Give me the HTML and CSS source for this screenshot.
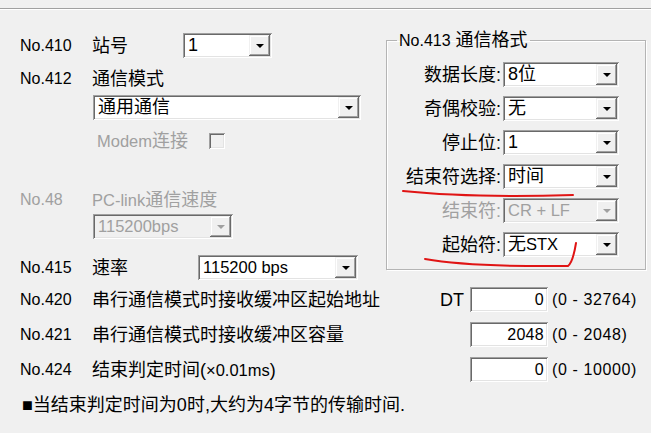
FILE: index.html
```html
<!DOCTYPE html>
<html lang="zh-CN">
<head>
  <meta charset="UTF-8"/>
  <title>通信设置</title>
  <link rel="stylesheet" href="styles.css"/>
</head>
<body>
  <div class="topline"></div>

  <div class="panel">
    <div class="upper">
      <!-- left column -->
      <div class="left">
        <div class="row r410">
          <span class="no num">No.410</span>
          <span class="name w91">站号</span>
          <div class="combo w89"><span class="val">1</span><span class="drop"><i></i></span></div>
        </div>

        <div class="row r412">
          <span class="no num">No.412</span>
          <span class="name">通信模式</span>
        </div>
        <div class="combo c412"><span class="val">通用通信</span><span class="drop"><i></i></span></div>

        <div class="row modem disabled">
          <span class="modem-label"><span class="lat">Modem</span>连接</span>
          <span class="check"></span>
        </div>

        <div class="row r48 disabled">
          <span class="no num">No.48</span>
          <span class="name"><span class="lat">PC-link</span>通信速度</span>
        </div>
        <div class="combo c48 off"><span class="val lat">115200bps</span><span class="drop"><i></i></span></div>

        <div class="row r415">
          <span class="no num">No.415</span>
          <span class="name w106">速率</span>
          <div class="combo w160"><span class="val lat">115200 bps</span><span class="drop"><i></i></span></div>
        </div>
      </div>

      <!-- No.413 group -->
      <fieldset class="group">
        <legend><span class="num">No.413</span> 通信格式</legend>
        <div class="group-rows">
          <div class="grow"><span class="glabel">数据长度:</span><div class="combo gcombo"><span class="val">8位</span><span class="drop"><i></i></span></div></div>
          <div class="grow"><span class="glabel">奇偶校验:</span><div class="combo gcombo"><span class="val">无</span><span class="drop"><i></i></span></div></div>
          <div class="grow"><span class="glabel">停止位:</span><div class="combo gcombo"><span class="val">1</span><span class="drop"><i></i></span></div></div>
          <div class="grow"><span class="glabel">结束符选择:</span><div class="combo gcombo"><span class="val">时间</span><span class="drop"><i></i></span></div></div>
          <div class="grow disabled"><span class="glabel">结束符:</span><div class="combo gcombo off"><span class="val lat">CR + LF</span><span class="drop"><i></i></span></div></div>
          <div class="grow"><span class="glabel">起始符:</span><div class="combo gcombo"><span class="val">无<span class="lat">STX</span></span><span class="drop"><i></i></span></div></div>
        </div>
      </fieldset>
    </div>

    <div class="lower">
      <div class="lrow">
        <span class="num">No.420</span>
        <span>串行通信模式时接收缓冲区起始地址</span>
        <span class="dt">DT</span>
        <span class="edit num">0</span>
        <span class="range num">(0 - 32764)</span>
      </div>
      <div class="lrow">
        <span class="num">No.421</span>
        <span>串行通信模式时接收缓冲区容量</span>
        <span class="dt"></span>
        <span class="edit num">2048</span>
        <span class="range num">(0 - 2048)</span>
      </div>
      <div class="lrow">
        <span class="num">No.424</span>
        <span>结束判定时间(<span class="lat">×0.01ms</span>)</span>
        <span class="dt"></span>
        <span class="edit num">0</span>
        <span class="range num">(0 - 10000)</span>
      </div>
    </div>

    <p class="note">■当结束判定时间为0时,大约为4字节的传输时间.</p>
  </div>

  <!-- hand-drawn red marks -->
  <svg class="marks" width="651" height="433" viewBox="0 0 651 433">
    <path d="M403 191 Q 470 198 573 195" fill="none" stroke="#e01414" stroke-width="2" stroke-linecap="round"/>
    <path d="M425 259 Q 470 267 568 266 Q 573 262 576 243" fill="none" stroke="#e01414" stroke-width="2" stroke-linecap="round"/>
  </svg>
</body>
</html>
```

FILE: styles.css
```css
* {
  box-sizing: border-box;
  margin: 0;
  padding: 0;
}

body {
  position: relative;
  width: 651px;
  height: 433px;
  overflow: hidden;
  background: #f0f0f0;
  color: #000;
  font-family: "Liberation Sans", "Noto Sans CJK SC", sans-serif;
  font-size: 18px;
  line-height: 22px;
}

/* narrow latin runs (numbers, item codes) */
.num { font-size: 16px; }
.lat { font-size: 16.5px; }

.disabled,
.off .val { color: #a0a0a0; }

/* top separator */
.topline {
  margin-top: 8px;
  border-top: 1px solid #a0a0a0;
  border-bottom: 1px solid #fff;
}

.panel { padding-left: 20px; }

.upper { display: flex; }

/* Left column */
.left { width: 366px; }

.row {
  display: flex;
  align-items: center;
  white-space: nowrap;
}
.no   { width: 72px; flex: none; }
.w91  { width: 91px; }
.w106 { width: 106px; }

.r410 { margin-top: 23px; height: 25px; }
.r412 { margin-top: 10px; height: 22px; }
.c412 { margin: 5px 0 0 73px; width: 268px; }
.modem { margin-top: 13px; height: 16px; padding-left: 77px; }
.modem-label { width: 112px; }
.r48  { margin-top: 40px; height: 22px; }
.c48  { margin: 3px 0 0 73px; width: 140px; }
.r415 { margin-top: 16px; height: 25px; }

/* Combo box */
.combo {
  display: flex;
  height: 25px;
  padding: 2px;
  background: #fff;
  box-shadow:
    inset 1px 1px #a0a0a0,
    inset -1px -1px #fff,
    inset 2px 2px #696969,
    inset -2px -2px #e3e3e3;
}
.w89  { width: 89px; }
.w160 { width: 160px; }

.combo .val {
  flex: 1;
  padding-left: 3px;
  line-height: 21px;
  white-space: nowrap;
  overflow: hidden;
}
.combo .drop {
  width: 21px;
  flex: none;
  display: flex;
  align-items: center;
  justify-content: center;
  background: #f0f0f0;
  box-shadow:
    inset -1px -1px #696969,
    inset 1px 1px #f0f0f0,
    inset -2px -2px #a0a0a0,
    inset 2px 2px #fff;
}
.combo .drop i {
  width: 0;
  height: 0;
  border-left: 4px solid transparent;
  border-right: 4px solid transparent;
  border-top: 4px solid #000;
}
.combo.off { background: #f0f0f0; }
.combo.off .drop i { border-top-color: #a0a0a0; }

/* Checkbox */
.check {
  width: 16px;
  height: 16px;
  background: #f0f0f0;
  box-shadow:
    inset 1px 1px #a0a0a0,
    inset -1px -1px #fff,
    inset 2px 2px #696969,
    inset -2px -2px #e3e3e3;
}

/* No.413 group box */
.group {
  margin-top: 19px;
  width: 260px;
  height: 241px;
  border: 1px solid #b4b4b4;
  box-shadow: inset 1px 1px #fff, 1px 1px #fff;
  padding: 0;
}
.group legend {
  margin-left: 10px;
  padding: 0 2px;
  white-space: nowrap;
}
.group-rows {
  display: flex;
  flex-direction: column;
  gap: 9px;
  margin-top: 10px;
}
.grow {
  display: flex;
  align-items: center;
  gap: 2px;
  height: 25px;
}
.glabel {
  width: 114px;
  text-align: right;
  white-space: nowrap;
}
.gcombo { width: 116px; }

/* Lower rows */
.lower {
  display: flex;
  flex-direction: column;
  gap: 10px;
  margin-top: 7px;
}
.lrow {
  display: grid;
  grid-template-columns: 72px 348px 30px 78px auto;
  align-items: center;
  height: 25px;
  white-space: nowrap;
}
.edit {
  height: 25px;
  padding-right: 4px;
  text-align: right;
  line-height: 25px;
  letter-spacing: 0.3px;
  background: #fff;
  box-shadow:
    inset 1px 1px #a0a0a0,
    inset -1px -1px #fff,
    inset 2px 2px #696969,
    inset -2px -2px #e3e3e3;
}
.range {
  padding-left: 4px;
  letter-spacing: 0.6px;
}

.note {
  margin-top: 12px;
  padding-left: 2px;
  height: 22px;
}

/* red pen marks over the form */
.marks {
  position: absolute;
  left: 0;
  top: 0;
  pointer-events: none;
}
```
